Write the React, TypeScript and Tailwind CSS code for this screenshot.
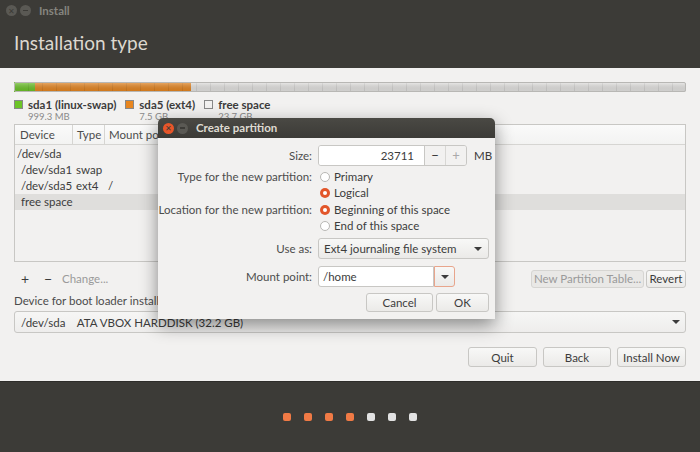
import React from 'react';

const font = { fontFamily: 'Lato, "Open Sans", sans-serif' };

function WinButtons({ active }: { active?: boolean }) {
  return (
    <div className="flex items-center gap-[3px]">
      <span
        className={`flex h-[11px] w-[11px] items-center justify-center rounded-full text-[8px] leading-none ${
          active ? 'bg-[#e8562a] text-[#3c3b37]' : 'bg-[#5a5954] text-[#3c3b37]'
        }`}
      >
        ✕
      </span>
      <span className="flex h-[11px] w-[11px] items-center justify-center rounded-full bg-[#5a5954]">
        <span className="h-[1.5px] w-[5px] bg-[#3c3b37]" />
      </span>
    </div>
  );
}

function PartitionBar() {
  const lines = [];
  for (let x = 14; x < 672; x += 14) lines.push(x);
  return (
    <svg width="672" height="10" viewBox="0 0 672 10" className="block">
      <defs>
        <linearGradient id="g" x1="0" y1="0" x2="0" y2="1">
          <stop offset="0" stopColor="#ffffff" stopOpacity="0.35" />
          <stop offset="1" stopColor="#000000" stopOpacity="0.08" />
        </linearGradient>
      </defs>
      <rect x="0" y="0" width="672" height="10" rx="1.5" fill="#e6e5e3" />
      <rect x="0" y="0" width="21" height="10" fill="#6cc427" />
      <rect x="21" y="0" width="156" height="10" fill="#e8861f" />
      {lines.map(x => (
        <line key={x} x1={x + 0.5} y1="0" x2={x + 0.5} y2="10" stroke="#000" strokeOpacity="0.08" />
      ))}
      <rect x="0" y="0" width="672" height="10" rx="1.5" fill="url(#g)" />
      <rect x="0.5" y="0.5" width="671" height="9" rx="1.5" fill="none" stroke="#b8b7b4" />
    </svg>
  );
}

function Legend({ color, name, size }: { color: string; name: string; size: string }) {
  return (
    <div className="flex flex-col">
      <div className="flex items-center gap-[5px]">
        <span className={`h-[9px] w-[9px] border border-[#888] ${color}`} />
        <span className="text-[11.5px] font-bold leading-[13px] text-[#3c3c3c]">{name}</span>
      </div>
      <span className="pl-[14px] text-[9.5px] leading-[11px] text-[#8a8a8a]">{size}</span>
    </div>
  );
}

function Btn({ children, className = '' }: { children: React.ReactNode; className?: string }) {
  return (
    <div
      className={`flex items-center justify-center rounded-[3px] border border-[#c8c7c4] bg-gradient-to-b from-[#f8f8f7] to-[#ebeae8] text-[#3c3c3c] ${className}`}
    >
      {children}
    </div>
  );
}

function Arrow() {
  return <span className="h-0 w-0 border-x-[4px] border-t-[4px] border-x-transparent border-t-[#3c3c3c]" />;
}

function Radio({ checked, label }: { checked?: boolean; label: string }) {
  return (
    <div className="flex h-[16px] items-center gap-[4px] pl-[2px]">
      {checked ? (
        <span className="flex h-[10px] w-[10px] items-center justify-center rounded-full bg-[#e2562a]">
          <span className="h-[4px] w-[4px] rounded-full bg-white" />
        </span>
      ) : (
        <span className="h-[10px] w-[10px] rounded-full border border-[#b8b7b4] bg-white" />
      )}
      <span className="text-[#3c3c3c]">{label}</span>
    </div>
  );
}

function Dialog() {
  return (
    <div className="absolute left-[158px] top-[118px] w-[337px] overflow-hidden rounded-t-[5px] bg-[#f2f1f0] text-[11.5px] shadow-[0_6px_18px_rgba(0,0,0,0.45)]">
      <div className="flex h-[20px] items-center gap-[8px] bg-gradient-to-b from-[#4a4944] to-[#3c3b37] pl-[5px]">
        <WinButtons active />
        <span className="font-bold text-[#dfdbd2]">Create partition</span>
      </div>
      <div className="flex flex-col whitespace-nowrap pb-[7px] pt-[7px] text-[#4c4c4c]">
        <div className="grid grid-cols-[154px_1fr] gap-x-[6px]">
          <div className="flex h-[21px] items-center justify-end">Size:</div>
          <div className="flex items-center gap-[7px]">
            <div className="flex h-[21px] w-[149px] overflow-hidden rounded-[3px] border border-[#c8c7c4]">
              <div className="flex flex-1 items-center justify-end bg-white pr-[10px] text-[#3c3c3c]">23711</div>
              <div className="flex w-[21px] items-center justify-center border-l border-[#c8c7c4] bg-[#f2f1f0] text-[13px] text-[#3c3c3c]">
                −
              </div>
              <div className="flex w-[21px] items-center justify-center border-l border-[#d8d7d4] bg-[#f2f1f0] text-[13px] text-[#a9a9a9]">
                +
              </div>
            </div>
            <span className="text-[#3c3c3c]">MB</span>
          </div>

          <div className="mt-[3px] flex h-[16px] items-center justify-end">Type for the new partition:</div>
          <div className="mt-[3px]">
            <Radio label="Primary" />
          </div>
          <div />
          <Radio checked label="Logical" />
          <div className="mt-[1px] flex h-[16px] items-center justify-end">Location for the new partition:</div>
          <div className="mt-[1px]">
            <Radio checked label="Beginning of this space" />
          </div>
          <div />
          <Radio label="End of this space" />

          <div className="mt-[4px] flex h-[21px] items-center justify-end">Use as:</div>
          <div className="mt-[4px] flex h-[21px] w-[171px] items-center justify-between rounded-[3px] border border-[#c8c7c4] bg-gradient-to-b from-[#f8f8f7] to-[#ebeae8] pl-[5px] pr-[6px] text-[#3c3c3c]">
            <span>Ext4 journaling file system</span>
            <Arrow />
          </div>

          <div className="mt-[7px] flex h-[21px] items-center justify-end">Mount point:</div>
          <div className="mt-[7px] flex h-[21px] w-[137px]">
            <div className="flex flex-1 items-center rounded-l-[3px] border border-[#c8c7c4] bg-white pl-[4px] text-[#3c3c3c]">
              /home
            </div>
            <div className="flex w-[21px] items-center justify-center rounded-r-[3px] border border-[#e8a58c] bg-gradient-to-b from-[#f8f8f7] to-[#ebeae8]">
              <Arrow />
            </div>
          </div>
        </div>
        <div className="mt-[6px] flex justify-end gap-[3px] pr-[6px]">
          <Btn className="h-[19px] w-[67px]">Cancel</Btn>
          <Btn className="h-[19px] w-[53px]">OK</Btn>
        </div>
      </div>
    </div>
  );
}

export default function App() {
  return (
    <div className="relative flex h-[452px] w-[700px] flex-col overflow-hidden" style={font}>
      <header className="flex h-[68px] flex-col bg-[#3c3b37] px-[6px]">
        <div className="flex h-[21px] items-center gap-[8px]">
          <WinButtons />
          <span className="text-[11.5px] font-bold text-[#86857f]">Install</span>
        </div>
        <h1 className="pl-[8px] pt-[11px] text-[19px] leading-[22px] text-[#dcd8cf]">Installation type</h1>
      </header>

      <main className="flex h-[313px] flex-col whitespace-nowrap bg-[#f2f1f0] px-[14px] pt-[14px] text-[11.5px] text-[#3c3c3c]">
        <PartitionBar />
        <div className="mt-[6px] flex gap-[9px]">
          <Legend color="bg-[#6cc427]" name="sda1 (linux-swap)" size="999.3 MB" />
          <Legend color="bg-[#e8861f]" name="sda5 (ext4)" size="7.5 GB" />
          <Legend color="bg-[#f2f1f0]" name="free space" size="23.7 GB" />
        </div>

        <div className="mt-[2px] flex h-[138px] flex-col border border-[#c8c7c4] bg-[#f2f1f0]">
          <div className="flex h-[20px] border-b border-[#d6d5d2] bg-gradient-to-b from-[#fafafa] to-[#f3f3f2] text-[#4c4c4c]">
            <div className="flex w-[58px] items-center border-r border-[#d6d5d2] pl-[5px]">Device</div>
            <div className="flex w-[32px] items-center border-r border-[#d6d5d2] pl-[4px]">Type</div>
            <div className="flex flex-1 items-center pl-[4px]">Mount point</div>
          </div>
          <div className="flex flex-col pt-[1px]">
            <div className="flex h-[16px] items-center pl-[2px]">/dev/sda</div>
            <div className="flex h-[16px] items-center">
              <span className="w-[61px] pl-[6px]">/dev/sda1</span>
              <span>swap</span>
            </div>
            <div className="flex h-[16px] items-center">
              <span className="w-[61px] pl-[6px]">/dev/sda5</span>
              <span className="w-[32px]">ext4</span>
              <span>/</span>
            </div>
            <div className="flex h-[16px] items-center bg-[#dfdedc] pl-[6px]">free space</div>
          </div>
        </div>

        <div className="mt-[8px] flex h-[18px] items-center">
          <span className="w-[22px] pl-[7px] text-[14px] leading-none text-[#3c3c3c]">+</span>
          <span className="w-[26px] pl-[8px] text-[14px] leading-none text-[#3c3c3c]">−</span>
          <span className="text-[#9a9a9a]">Change...</span>
          <div className="ml-auto flex gap-[2px]">
            <div className="flex h-[18px] w-[113px] items-center justify-center rounded-[3px] border border-[#d6d5d2] bg-[#e9e8e6] text-[#9a9a9a]">
              New Partition Table...
            </div>
            <Btn className="h-[18px] w-[40px]">Revert</Btn>
          </div>
        </div>

        <div className="mt-[4px] text-[#4c4c4c]">Device for boot loader installation:</div>
        <div className="mt-[2px] flex h-[22px] items-center justify-between rounded-[3px] border border-[#c8c7c4] bg-gradient-to-b from-[#f6f6f5] to-[#eeedec] pl-[6px] pr-[5px]">
          <span className="whitespace-pre">/dev/sda    ATA VBOX HARDDISK (32.2 GB)</span>
          <Arrow />
        </div>

        <div className="mt-[14px] flex justify-end gap-[6px]">
          <Btn className="h-[20px] w-[69px]">Quit</Btn>
          <Btn className="h-[20px] w-[68px]">Back</Btn>
          <Btn className="h-[20px] w-[69px]">Install Now</Btn>
        </div>
      </main>

      <footer className="flex flex-1 items-center justify-center gap-[13px] border-t border-[#2e2d2a] bg-[#3c3b37]">
        {[0, 1, 2, 3, 4, 5, 6].map(i => (
          <span
            key={i}
            className={`h-[8px] w-[8px] rounded-[2px] ${i < 4 ? 'bg-[#f07a45]' : 'bg-[#e2e2e2]'}`}
          />
        ))}
      </footer>

      <Dialog />
    </div>
  );
}
